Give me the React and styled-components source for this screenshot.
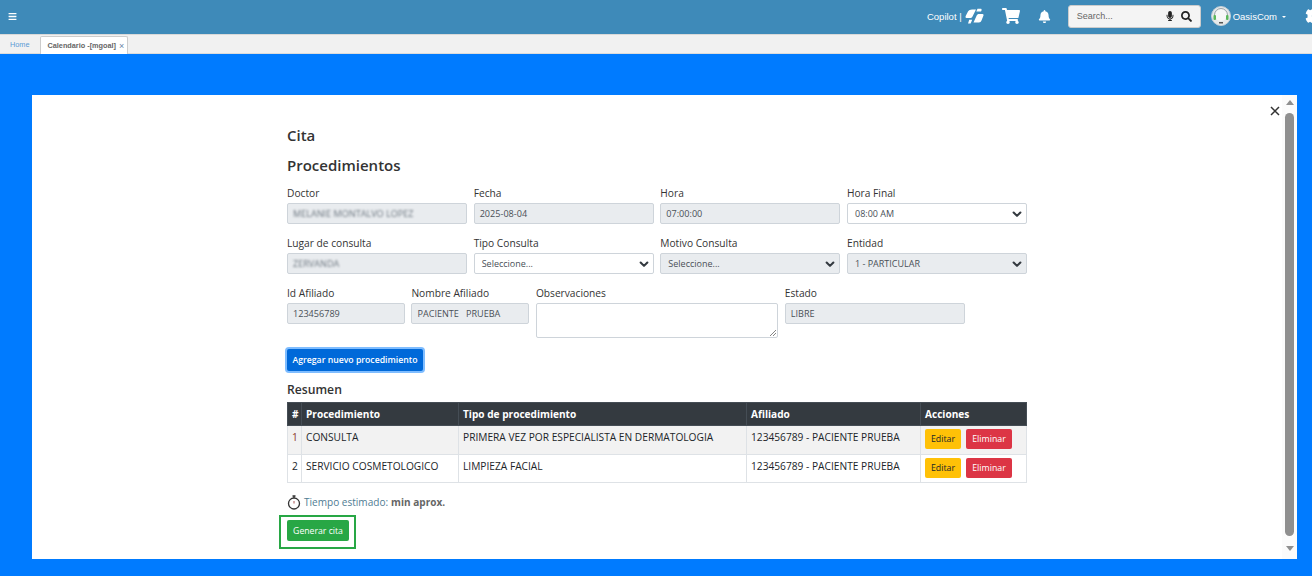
import React from 'react'
import styled, { createGlobalStyle } from 'styled-components'
import { FaBars, FaShoppingCart, FaBell, FaMicrophone, FaSearch, FaCog } from 'react-icons/fa'

const Global = createGlobalStyle`
  html, body { margin:0; padding:0; height:576px; overflow:hidden; background:#007bff; }
  * { box-sizing:border-box; }
  #root { height:576px; font-family:"Open Sans","Noto Sans",sans-serif; }
`
const Shell = styled.div`
  width:1312px;
  height:576px;
  display:flex;
  flex-direction:column;
  overflow:hidden;
`
const TopBar = styled.header`
  height:35px;
  flex:none;
  background:#3e8ab9;
  border-bottom:1px solid #d9d9d9;
  display:flex;
  align-items:center;
  color:#fff;
  font-family:"Liberation Sans",Arial,sans-serif;
  padding:0 0 2px 8px;
`
const Right = styled.div`
  margin-left:auto;
  display:flex;
  align-items:center;
  margin-right:-13px;
`
const CopilotText = styled.span`
  font-size:9.5px;
  margin-right:3px;
`
const Cart = styled(FaShoppingCart)`
  font-size:18px;
  margin-left:18px;
`
const Bell = styled(FaBell)`
  font-size:13px;
  margin-left:18px;
`
const SearchBox = styled.div`
  width:133px;
  height:23px;
  margin-left:17px;
  background:#f4f4f4;
  border:1px solid #ccc;
  border-radius:3px;
  display:flex;
  align-items:center;
  padding:0 8px 0 8px;
  color:#222;
  gap:6px;
`
const SearchText = styled.span`
  font-size:9px;
  color:#666;
  flex:1;
`
const Profile = styled.div`
  display:flex;
  align-items:center;
  margin-left:10px;
  font-size:9.5px;
  gap:2px;
`
const Caret = styled.i`
  width:0;
  height:0;
  margin:2px 0 0 3px;
  border-left:2px solid transparent;
  border-right:2px solid transparent;
  border-top:2px solid #fff;
`
const Gear = styled(FaCog)`
  font-size:20px;
  margin-left:19px;
`
const Tabs = styled.nav`
  height:19px;
  flex:none;
  background:#f1f1f1;
  border-bottom:1px solid #dcdcdc;
  display:flex;
  align-items:flex-end;
  padding-left:10px;
  font-family:"Liberation Sans",Arial,sans-serif;
  font-size:7.3px;
`
const HomeTab = styled.span`
  color:#5a9bd5;
  align-self:center;
  margin-right:11px;
`
const ActiveTab = styled.span`
  height:18px;
  margin-bottom:-1px;
  background:#fff;
  border:1px solid #ccc;
  border-bottom:none;
  border-radius:2px 2px 0 0;
  padding:0 3px 0 6px;
  display:flex;
  align-items:center;
  gap:3px;
  color:#666;
  font-weight:bold;
`
const TabClose = styled.span`
  color:#6a86a8;
  font-size:9px;
  font-weight:normal;
`
const Stage = styled.main`
  flex:1;
  background:#007bff;
  padding:41px 15px 17px 32px;
  display:flex;
`
const Modal = styled.section`
  flex:1;
  background:#fff;
  display:flex;
  position:relative;
`
const CloseBtn = styled.span`
  position:absolute;
  top:11px;
  right:17px;
  width:10px;
  height:10px;
  line-height:0;
`
const Body = styled.div`
  flex:1;
  display:flex;
  justify-content:center;
  padding:30px 0 0 0;
`
const Column = styled.div`
  width:740px;
  color:#212529;
`
const Title = styled.h5`
  margin:0 0 10px;
  font-size:15px;
  line-height:20px;
  font-weight:600;
  color:#333;
`
const Grid = styled.div`
  display:grid;
  grid-template-columns:repeat(12,1fr);
  column-gap:6.67px;
  margin-top:${p => p.$top || 0}px;
`
const Field = styled.div`
  grid-column:span ${p => p.$span || 3};
  display:flex;
  flex-direction:column;
`
const Label = styled.label`
  font-size:10.2px;
  line-height:15px;
  height:15px;
  margin-bottom:2px;
  color:#333;
`
const Input = styled.div`
  height:21px;
  border:1px solid #ced4da;
  border-radius:2px;
  background:#e9ecef;
  color:#495057;
  font-size:9.1px;
  line-height:19px;
  padding:0 5px;
  white-space:pre;
  overflow:hidden;
`
const Blurred = styled.span`
  filter:blur(1.3px);
  color:#6d7780;
  display:inline-block;
`
const Select = styled.div`
  height:21px;
  border:1px solid #ced4da;
  border-radius:2px;
  background:${p => p.$disabled ? '#e9ecef' : '#fff'};
  color:#495057;
  font-size:9px;
  line-height:20px;
  padding:0 3px 0 7px;
  display:flex;
  align-items:center;
  justify-content:space-between;
`
const Textarea = styled.div`
  height:35px;
  border:1px solid #ced4da;
  border-radius:2px;
  background:#fff;
  display:flex;
  align-items:flex-end;
  justify-content:flex-end;
  padding:1px;
  line-height:0;
`
const Button = styled.button`
  font-family:inherit;
  font-size:${p => p.$size || 8.7}px;
  font-weight:${p => p.$weight || 600};
  border:0;
  border-radius:2px;
  color:${p => p.$fg || '#fff'};
  background:${p => p.$bg};
  height:${p => p.$h || 22}px;
  width:${p => p.$w ? p.$w + 'px' : 'auto'};
  padding:0 ${p => p.$px === undefined ? 6 : p.$px}px;
  white-space:nowrap;
`
const AddButton = styled(Button)`
  display:block;
  margin:11px 0 0;
  box-shadow:0 0 0 2px #7fbdff;
`
const Subtitle = styled.h6`
  margin:10px 0 4px;
  font-size:12.2px;
  line-height:17px;
  font-weight:600;
  color:#333;
`
const Table = styled.table`
  width:739px;
  table-layout:fixed;
  border-collapse:collapse;
  font-size:10.2px;
  color:#212529;
`
const Head = styled.th`
  background:#343a40;
  color:#fff;
  border:1px solid #454d55;
  height:23px;
  text-align:left;
  padding:0 4px;
  font-size:10.1px;
  font-weight:700;
`
const Row = styled.tr`
  background:${p => p.$odd ? '#f2f2f2' : '#fff'};
`
const Cell = styled.td`
  border:1px solid #dee2e6;
  height:${p => p.$h || 29}px;
  padding:4px 4px 0;
  vertical-align:top;
  line-height:14px;
  white-space:nowrap;
  color:${p => p.$fg || '#212529'};
`
const Actions = styled.div`
  display:flex;
  gap:5px;
  margin-top:-1px;
`
const Estimate = styled.p`
  margin:11px 0 0;
  height:16px;
  display:flex;
  align-items:center;
  gap:3px;
  font-size:10.05px;
  color:#4f7c93;
`
const EstimateStrong = styled.b`
  color:#666;
  font-weight:700;
`
const Highlight = styled.div`
  width:77px;
  height:34px;
  margin:5px 0 0 -8px;
  border:2px solid #28a745;
  padding:3px 0 0 6px;
  display:flex;
  align-items:flex-start;
`
const Scrollbar = styled.aside`
  width:15px;
  flex:none;
  background:#fbfbfb;
  display:flex;
  flex-direction:column;
  align-items:center;
  padding-top:5px;
`
const ArrowUp = styled.i`
  width:0;
  height:0;
  border-left:4.5px solid transparent;
  border-right:4.5px solid transparent;
  border-bottom:5px solid #8f8f8f;
`
const ArrowDown = styled.i`
  width:0;
  height:0;
  margin-top:10px;
  border-left:4.5px solid transparent;
  border-right:4.5px solid transparent;
  border-top:5px solid #8f8f8f;
`
const Thumb = styled.div`
  width:9px;
  height:423px;
  margin-top:8px;
  border-radius:5px;
  background:#8f8f8f;
`

const Chevron = () => (
  <svg width="12" height="12" viewBox="0 0 16 16">
    <path d="M3.500 6l4.500 4.500L12.500 6" fill="none" stroke="#343a40" strokeWidth="2.8" strokeLinecap="round" strokeLinejoin="round" />
  </svg>
)
const CopilotLogo = () => (
  <svg width="19" height="16" viewBox="0 0 19 16">
    <path d="M7 1.500h4L7.500 8.500c-.5 1-1.500 1.500-2.500 1.500H1.500C.5 10 .3 9 .7 8L3 3.500C3.600 2.200 5.500 1.500 7 1.500z" fill="#fff" />
    <path d="M14 14.500H8.500l3.200-7c.5-1 1.300-1.500 2.300-1.500h3.500c1 0 1.300.9.900 1.800L16.500 12.500c-.5 1.200-1.300 2-2.500 2z" fill="#fff" />
    <path d="M12.500 .8h3c1 0 1.400.7 1 1.600L16 3.600h-4.700z" fill="#fff" />
    <path d="M3 15.500l1.200-3.800h3l-1.600 3.800z" fill="#fff" />
  </svg>
)
const Avatar = () => (
  <svg width="20" height="20" viewBox="0 0 20 20">
    <circle cx="10" cy="10" r="9.500" fill="#e6e9ea" stroke="#c4cfd6" />
    <circle cx="10" cy="9" r="6" fill="#f7f7f7" />
    <path d="M3.500 11V9a6.500 6.500 0 0 1 13 0v2" fill="none" stroke="#9aa3a8" strokeWidth="1" />
    <rect x="2.500" y="9" width="2.500" height="5" rx="1" fill="#5cb85c" />
    <rect x="15" y="9" width="2.500" height="5" rx="1" fill="#5cb85c" />
    <rect x="8" y="16" width="4" height="1.500" fill="#555" />
  </svg>
)
const Stopwatch = () => (
  <svg width="14" height="15" viewBox="0 0 14 15">
    <circle cx="7" cy="8.500" r="5.500" fill="none" stroke="#333" strokeWidth="1.300" />
    <path d="M5.500 1h3M7 1v2" stroke="#333" strokeWidth="1.300" fill="none" />
    <path d="M7 8.500V6" stroke="#a55" strokeWidth="1" fill="none" />
  </svg>
)

const procedures = [
  { n: 1, name: 'CONSULTA', type: 'PRIMERA VEZ POR ESPECIALISTA EN DERMATOLOGIA', h: 29 },
  { n: 2, name: 'SERVICIO COSMETOLOGICO', type: 'LIMPIEZA FACIAL', h: 28 },
]

export default function App() {
  return (
    <Shell>
      <Global />
      <TopBar>
        <FaBars size={9} />
        <Right>
          <CopilotText>Copilot |</CopilotText>
          <CopilotLogo />
          <Cart />
          <Bell />
          <SearchBox>
            <SearchText>Search...</SearchText>
            <FaMicrophone size={10} />
            <FaSearch size={11} />
          </SearchBox>
          <Profile>
            <Avatar />
            <span>OasisCom</span>
            <Caret />
          </Profile>
          <Gear />
        </Right>
      </TopBar>
      <Tabs>
        <HomeTab>Home</HomeTab>
        <ActiveTab>Calendario -[mgoal] <TabClose>×</TabClose></ActiveTab>
      </Tabs>
      <Stage>
        <Modal>
          <CloseBtn>
            <svg width="10" height="10" viewBox="0 0 10 10">
              <path d="M1 1l8 8M9 1l-8 8" stroke="#333" strokeWidth="1.500" />
            </svg>
          </CloseBtn>
          <Body>
            <Column>
              <Title>Cita</Title>
              <Title>Procedimientos</Title>
              <Grid $top={11}>
                <Field><Label>Doctor</Label><Input><Blurred>MELANIE MONTALVO LOPEZ</Blurred></Input></Field>
                <Field><Label>Fecha</Label><Input>2025-08-04</Input></Field>
                <Field><Label>Hora</Label><Input>07:00:00</Input></Field>
                <Field><Label>Hora Final</Label><Select>08:00 AM<Chevron /></Select></Field>
              </Grid>
              <Grid $top={12}>
                <Field><Label>Lugar de consulta</Label><Input><Blurred>ZERVANDA</Blurred></Input></Field>
                <Field><Label>Tipo Consulta</Label><Select>Seleccione...<Chevron /></Select></Field>
                <Field><Label>Motivo Consulta</Label><Select $disabled>Seleccione...<Chevron /></Select></Field>
                <Field><Label>Entidad</Label><Select $disabled>1 - PARTICULAR<Chevron /></Select></Field>
              </Grid>
              <Grid $top={12}>
                <Field $span={2}><Label>Id Afiliado</Label><Input>123456789</Input></Field>
                <Field $span={2}><Label>Nombre Afiliado</Label><Input>PACIENTE   PRUEBA</Input></Field>
                <Field $span={4}>
                  <Label>Observaciones</Label>
                  <Textarea>
                    <svg width="7" height="7" viewBox="0 0 7 7">
                      <path d="M1 7l6-6M4 7l3-3" stroke="#666" strokeWidth=".8" />
                    </svg>
                  </Textarea>
                </Field>
                <Field><Label>Estado</Label><Input>LIBRE</Input></Field>
              </Grid>
              <AddButton $bg="#0069d9" $w={136} $px={0}>Agregar nuevo procedimiento</AddButton>
              <Subtitle>Resumen</Subtitle>
              <Table>
                <colgroup>
                  <col width="14" />
                  <col width="157" />
                  <col width="288" />
                  <col width="174" />
                  <col width="106" />
                </colgroup>
                <thead>
                  <tr>
                    <Head>#</Head>
                    <Head>Procedimiento</Head>
                    <Head>Tipo de procedimiento</Head>
                    <Head>Afiliado</Head>
                    <Head>Acciones</Head>
                  </tr>
                </thead>
                <tbody>
                  {procedures.map(p => (
                    <Row key={p.n} $odd={p.n === 1}>
                      <Cell $h={p.h} $fg={p.n === 1 ? '#8a3a2a' : undefined}>{p.n}</Cell>
                      <Cell $h={p.h}>{p.name}</Cell>
                      <Cell $h={p.h}>{p.type}</Cell>
                      <Cell $h={p.h}>123456789 - PACIENTE PRUEBA</Cell>
                      <Cell $h={p.h}>
                        <Actions>
                          <Button $bg="#ffc107" $fg="#212529" $h={20} $w={36} $px={0} $size={8.8} $weight={400}>Editar</Button>
                          <Button $bg="#dc3545" $h={20} $w={46} $px={0} $size={8.8} $weight={400}>Eliminar</Button>
                        </Actions>
                      </Cell>
                    </Row>
                  ))}
                </tbody>
              </Table>
              <Estimate>
                <Stopwatch />
                Tiempo estimado: <EstimateStrong>min aprox.</EstimateStrong>
              </Estimate>
              <Highlight>
                <Button $bg="#28a745" $h={21} $w={62} $px={0} $weight={500}>Generar cita</Button>
              </Highlight>
            </Column>
          </Body>
          <Scrollbar>
            <ArrowUp />
            <Thumb />
            <ArrowDown />
          </Scrollbar>
        </Modal>
      </Stage>
    </Shell>
  )
}
